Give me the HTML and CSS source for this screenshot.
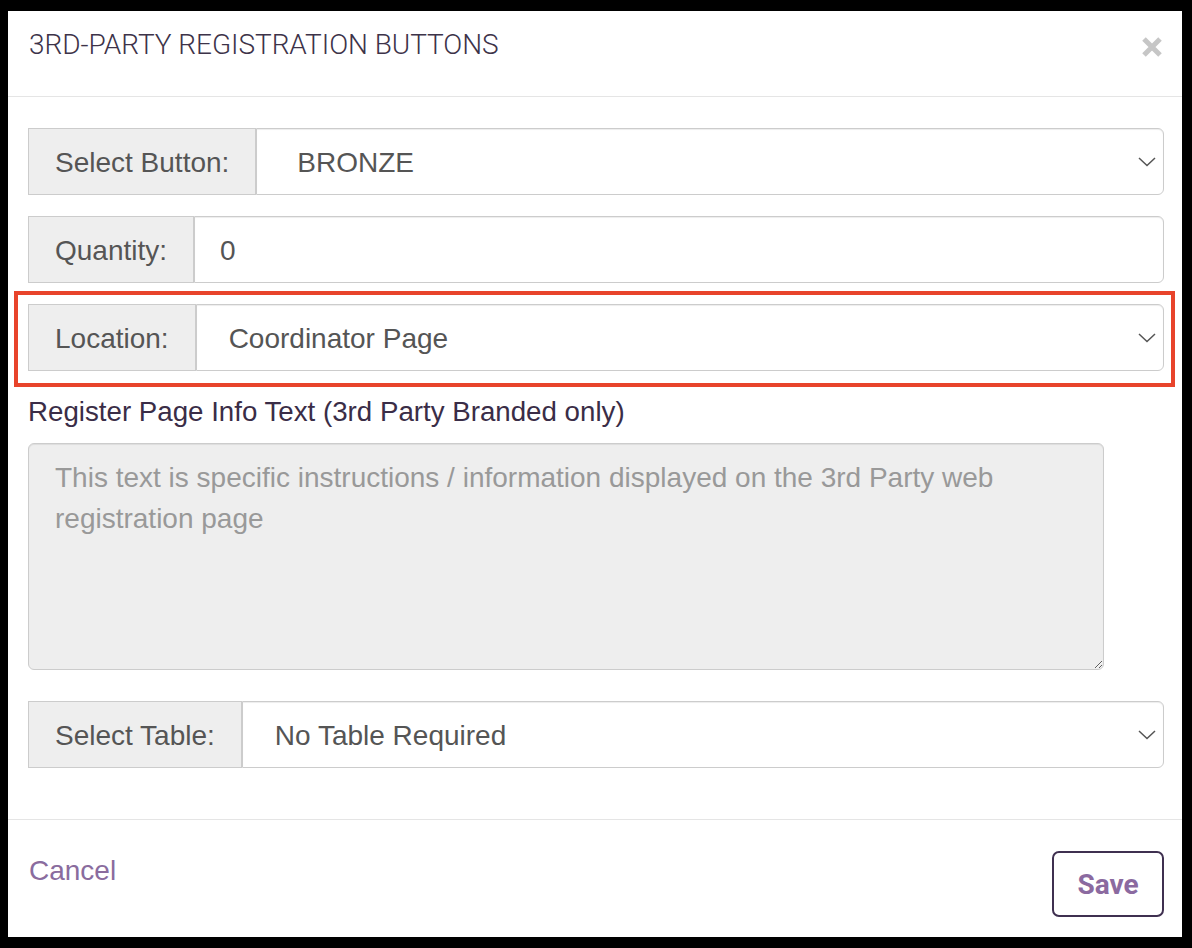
FILE: index.html
```html
<!DOCTYPE html>
<html lang="en">
<head>
<meta charset="utf-8">
<title>3rd-Party Registration Buttons</title>
<link rel="stylesheet" href="styles.css">
</head>
<body>
<div class="modal">
  <div class="modal-header">
    <h1 class="modal-title">3RD-PARTY REGISTRATION BUTTONS</h1>
    <button class="close" aria-label="Close">
      <svg width="22" height="22" viewBox="0 0 22 22"><path d="M3 3 L19 19 M19 3 L3 19" stroke="#c6c6c6" stroke-width="5" stroke-linecap="butt"/></svg>
    </button>
  </div>
  <div class="modal-body">
    <div class="input-group">
      <span class="addon">Select Button:</span>
      <div class="control select pad-lg">BRONZE
        <svg class="chev" width="18" height="10" viewBox="0 0 18 10"><polyline points="1,1 9,8.5 17,1" fill="none" stroke="#555" stroke-width="1.5"/></svg>
      </div>
    </div>
    <div class="input-group">
      <span class="addon">Quantity:</span>
      <div class="control pad-sm">0</div>
    </div>
    <div class="input-group highlighted">
      <span class="addon">Location:</span>
      <div class="control select">Coordinator Page
        <svg class="chev" width="18" height="10" viewBox="0 0 18 10"><polyline points="1,1 9,8.5 17,1" fill="none" stroke="#555" stroke-width="1.5"/></svg>
      </div>
      <span class="annotation"></span>
    </div>
    <label class="field-label" for="info">Register Page Info Text (3rd Party Branded only)</label>
    <textarea id="info" class="info-text" placeholder="This text is specific instructions / information displayed on the 3rd Party web registration page"></textarea>
    <div class="input-group">
      <span class="addon">Select Table:</span>
      <div class="control select">No Table Required
        <svg class="chev" width="18" height="10" viewBox="0 0 18 10"><polyline points="1,1 9,8.5 17,1" fill="none" stroke="#555" stroke-width="1.5"/></svg>
      </div>
    </div>
  </div>
  <div class="modal-footer">
    <a class="cancel" href="#">Cancel</a>
    <button class="save">Save</button>
  </div>
</div>
</body>
</html>
```
FILE: styles.css
```css
* { box-sizing: border-box; }
html, body { margin: 0; }
body {
  background: #000;
  padding: 11px 10px 11px 8px;
  height: 948px;
  font-family: "Liberation Sans", Arial, sans-serif;
}
.modal {
  background: #fff;
  height: 926px;
  display: flex;
  flex-direction: column;
}
.modal-header {
  height: 86px;
  border-bottom: 1px solid #e5e5e5;
  display: flex;
  justify-content: space-between;
  align-items: flex-start;
  padding: 17px 19px 0 21px;
}
.modal-title {
  margin: 0;
  font-family: Roboto, "Liberation Sans", sans-serif;
  font-weight: 300;
  font-size: 28px;
  line-height: 34px;
  letter-spacing: -0.05px;
  color: #3d3349;
}
.close {
  border: 0;
  background: none;
  padding: 0;
  margin-top: 8px;
  width: 22px;
  height: 22px;
  display: block;
}
.close svg { display: block; }
.modal-body {
  padding: 31px 18px 30px 20px;
}
.input-group {
  display: flex;
  height: 67px;
  margin-bottom: 21px;
  position: relative;
  font-size: 28px;
  color: #555;
}
.addon {
  background: #eee;
  border: 1px solid #ccc;
  padding: 2px 26px 0 26px;
  display: flex;
  align-items: center;
  white-space: nowrap;
}
.control {
  flex: 1;
  border: 1px solid #ccc;
  border-radius: 0 6px 6px 0;
  display: flex;
  align-items: center;
  padding: 2px 0 0 32px;
  position: relative;
  box-shadow: inset 0 1px 1px rgba(0,0,0,0.075);
  background: #fff;
}
.control.pad-lg { padding-left: 40px; }
.control.pad-sm { padding-left: 25px; }
.chev {
  position: absolute;
  right: 7px;
  top: 50%;
  margin-top: -5px;
}
.annotation {
  position: absolute;
  left: -14px;
  top: -13px;
  right: -11px;
  bottom: -16px;
  border: 4px solid #e8442b;
  pointer-events: none;
}
.field-label {
  display: block;
  font-size: 27.7px;
  line-height: 40px;
  color: #3a2d47;
  margin-bottom: 11px;
}
.info-text {
  display: block;
  width: 1076px;
  height: 227px;
  margin: 0 0 31px 0;
  background: #eee;
  border: 1px solid #ccc;
  border-radius: 6px;
  padding: 13px 26px;
  font-family: "Liberation Sans", Arial, sans-serif;
  font-size: 28px;
  line-height: 41px;
  color: #555;
  resize: vertical;
  box-shadow: inset 0 1px 1px rgba(0,0,0,0.075);
}
.info-text::placeholder { color: #999; }
.modal-footer {
  border-top: 1px solid #e5e5e5;
  display: flex;
  justify-content: space-between;
  align-items: flex-start;
  padding: 31px 18px 20px 21px;
}
.cancel {
  font-size: 28px;
  line-height: 40px;
  color: #8a6c9e;
  text-decoration: none;
}
.save {
  width: 112px;
  height: 66px;
  border: 2px solid #3f3050;
  border-radius: 7px;
  background: #fff;
  font-family: Roboto, "Liberation Sans", sans-serif;
  font-weight: 700;
  font-size: 28px;
  color: #8b6aa0;
  padding: 0;
}
```
